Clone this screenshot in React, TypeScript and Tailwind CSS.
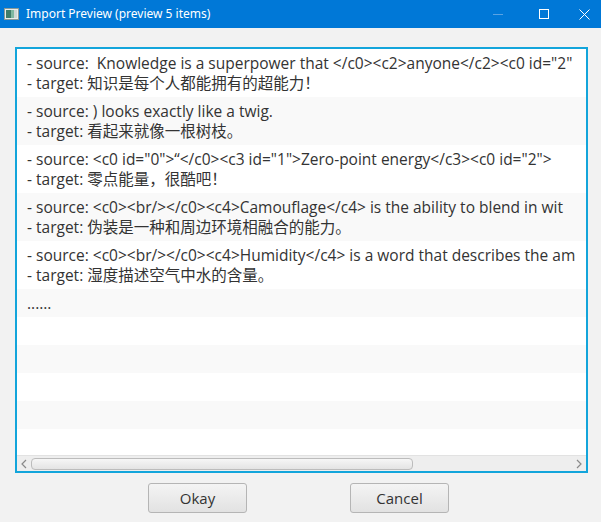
import React from "react";

const rows: { src?: string; tgt?: string; single?: string }[] = [
  {
    src: '- source:  Knowledge is a superpower that </c0><c2>anyone</c2><c0 id="2"',
    tgt: "- target: 知识是每个人都能拥有的超能力！",
  },
  { src: "- source: ) looks exactly like a twig.", tgt: "- target: 看起来就像一根树枝。" },
  {
    src: '- source: <c0 id="0">“</c0><c3 id="1">Zero-point energy</c3><c0 id="2">',
    tgt: "- target: 零点能量，很酷吧！",
  },
  {
    src: "- source: <c0><br/></c0><c4>Camouflage</c4> is the ability to blend in wit",
    tgt: "- target: 伪装是一种和周边环境相融合的能力。",
  },
  {
    src: "- source: <c0><br/></c0><c4>Humidity</c4> is a word that describes the am",
    tgt: "- target: 湿度描述空气中水的含量。",
  },
  { single: "......" },
  {},
  {},
  {},
  {},
  {},
];

export default function App() {
  return (
    <div
      className="w-[601px] h-[522px] bg-[#f2f2f2] flex flex-col overflow-hidden"
      style={{ fontFamily: '"Open Sans", "Noto Sans CJK SC", sans-serif' }}
    >
      {/* Title bar */}
      <div className="h-[28px] bg-[#0078d7] flex items-center shrink-0">
        <svg width="15" height="12" viewBox="0 0 15 12" className="ml-[4px]">
          <rect x="0.5" y="0.5" width="14" height="11" fill="#e8ecea" stroke="#8a9a96" />
          <rect x="2" y="2" width="5" height="8" fill="#3f7d6a" />
          <rect x="7" y="2" width="3" height="8" fill="#7fb8a0" />
          <rect x="10" y="2" width="3" height="8" fill="#cfd8d4" />
        </svg>
        <span className="ml-[7px] text-white text-[12px] leading-none" style={{ fontFamily: '"Noto Sans", sans-serif' }}>
          Import Preview (preview 5 items)
        </span>
        <div className="ml-auto flex items-center h-full">
          <div className="w-[46px] h-full flex items-center justify-center">
            <div className="w-[10px] h-px bg-[#5aa3e3]" />
          </div>
          <div className="w-[46px] h-full flex items-center justify-center">
            <div className="w-[10px] h-[10px] border border-white" />
          </div>
          <div className="w-[34px] h-full flex items-center justify-start pl-[12px]">
            <svg width="11" height="11" viewBox="0 0 11 11">
              <path d="M0.5 0.5 L10.5 10.5 M10.5 0.5 L0.5 10.5" stroke="white" strokeWidth="1" />
            </svg>
          </div>
        </div>
      </div>

      {/* Body */}
      <div className="flex-1 flex flex-col pt-[19px] pl-[15px] pr-[13px]">
        <div className="h-[426px] border-2 border-[#13a5db] bg-white flex flex-col overflow-hidden">
          <div className="flex-1 overflow-hidden flex flex-col text-[15.5px] leading-[20px] text-[#333333]">
            {rows.map((r, i) => (
              <div
                key={i}
                className={`shrink-0 pl-[10px] py-[4px] whitespace-pre overflow-hidden ${
                  i % 2 === 1 ? "bg-[#f9f9f9]" : "bg-white"
                }`}
              >
                {r.src ? (
                  <>
                    <div>{r.src}</div>
                    <div>{r.tgt}</div>
                  </>
                ) : r.single ? (
                  <div>{r.single}</div>
                ) : (
                  <div className="h-[20px]" />
                )}
              </div>
            ))}
          </div>
          {/* horizontal scrollbar */}
          <div className="h-[16px] shrink-0 bg-[#eeeeee] border-t border-[#e2e2e2] flex items-center">
            <div className="w-[14px] flex items-center justify-center">
              <svg width="6" height="10" viewBox="0 0 6 10">
                <path d="M5 1 L1 5 L5 9" stroke="#8a8a8a" strokeWidth="1.2" fill="none" />
              </svg>
            </div>
            <div className="w-[382px] h-[12px] rounded-[4px] border border-[#bcbcbc] bg-gradient-to-b from-[#f6f6f6] to-[#e4e4e4]" />
            <div className="flex-1" />
            <div className="w-[14px] flex items-center justify-center">
              <svg width="6" height="10" viewBox="0 0 6 10">
                <path d="M1 1 L5 5 L1 9" stroke="#8a8a8a" strokeWidth="1.2" fill="none" />
              </svg>
            </div>
          </div>
        </div>

        {/* Buttons */}
        <div className="flex justify-center gap-[103px] pt-[10px] pr-[6px]">
          <button className="w-[99px] h-[30px] rounded-[3px] border border-[#b5b5b5] bg-gradient-to-b from-[#f4f4f4] to-[#e2e2e2] text-[15px] text-[#333]">
            Okay
          </button>
          <button className="w-[99px] h-[30px] rounded-[3px] border border-[#b5b5b5] bg-gradient-to-b from-[#f4f4f4] to-[#e2e2e2] text-[15px] text-[#333]">
            Cancel
          </button>
        </div>
      </div>
    </div>
  );
}
